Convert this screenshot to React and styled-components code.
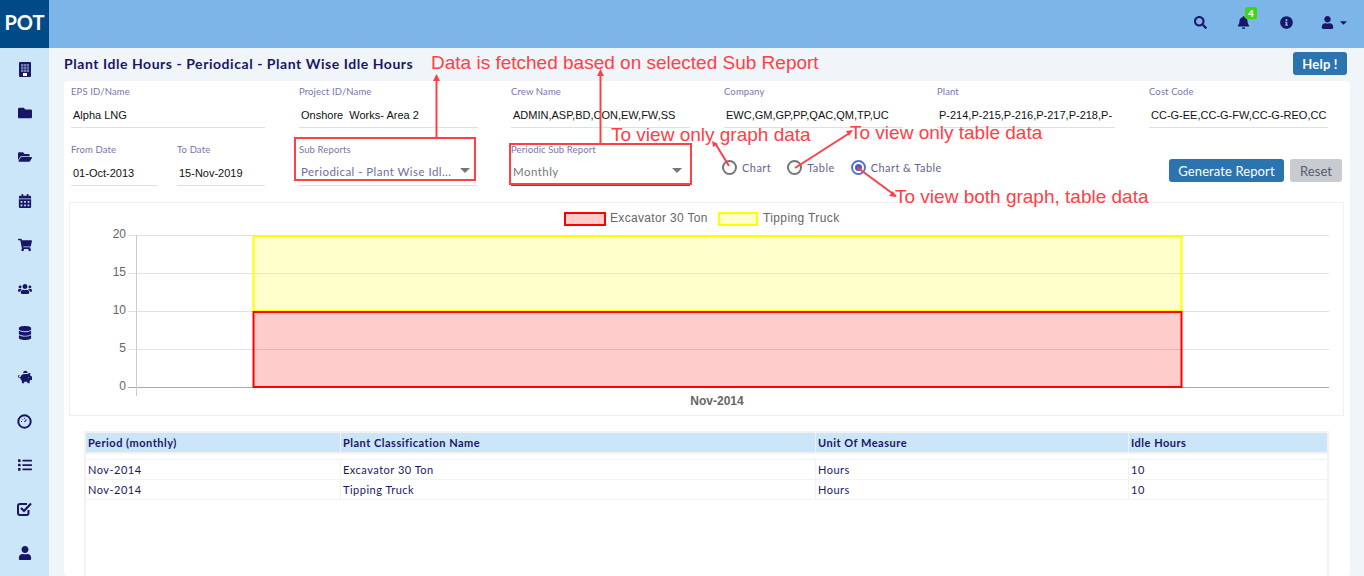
import React from "react";
import styled, { createGlobalStyle } from "styled-components";
import {
  FaFolder, FaFolderOpen, FaCalendarAlt, FaShoppingCart, FaUsers, FaDatabase,
  FaPiggyBank, FaUser, FaSearch, FaBell, FaInfoCircle, FaCaretDown, FaList,
} from "react-icons/fa";

const NAVY = "#1a1667";
const RED = "#ff4046";

const Global = createGlobalStyle`
  html, body { margin: 0; padding: 0; height: 100%; overflow: hidden; background: #f0f5f9; }
  body { font-family: Lato, "Liberation Sans", sans-serif; }
  * { box-sizing: border-box; }
`;

const Page = styled.div`
  position: relative;
  width: 1364px;
  height: 576px;
  overflow: hidden;
  display: grid;
  grid-template-columns: 49px 1fr;
  grid-template-rows: 48px 1fr;
`;
const Logo = styled.div`
  background: #004b87;
  color: #fff;
  font-weight: 700;
  font-size: 20px;
  display: flex;
  align-items: center;
  justify-content: center;
  padding-bottom: 5px;
`;
const TopBar = styled.header`
  background: #7cb6e8;
  display: flex;
  align-items: center;
  justify-content: flex-end;
  padding-right: 15px;
  gap: 30px;
  color: ${NAVY};
  font-size: 13px;
  padding-bottom: 3px;
`;
const TopIcon = styled.span`
  position: relative;
  display: flex;
  align-items: center;
`;
const UserIcon = styled(TopIcon)`
  margin-left: -2px;
`;
const CaretIcon = styled(FaCaretDown)`
  margin-left: 4px;
  font-size: 11px;
`;
const Badge = styled.span`
  position: absolute;
  top: -9px;
  left: 8px;
  min-width: 12px;
  height: 12px;
  border-radius: 2px;
  background: #39d811;
  color: #fff;
  font-size: 10px;
  font-weight: 700;
  text-align: center;
  line-height: 12px;
`;
const Sidebar = styled.nav`
  background: #cbe5f9;
  color: ${NAVY};
  display: flex;
  flex-direction: column;
  align-items: center;
  padding-top: 14px;
  font-size: 14px;
  gap: 30px;
`;
const SideIcon = styled.span`
  height: 14px;
  display: flex;
  align-items: center;
  justify-content: center;
`;
const Main = styled.main`
  padding: 4px 14px 0 15px;
  display: flex;
  flex-direction: column;
  min-width: 0;
`;
const TitleRow = styled.div`
  display: flex;
  align-items: flex-start;
  justify-content: space-between;
  height: 29px;
`;
const Title = styled.h1`
  margin: 3px 0 0;
  font-size: 14px;
  line-height: 17px;
  font-weight: 700;
  color: ${NAVY};
  letter-spacing: 0.55px;
`;
const Button = styled.button`
  border: 0;
  border-radius: 3px;
  font-family: Lato, sans-serif;
  font-size: 13px;
  letter-spacing: 0.1px;
  background: ${(p) => (p.$muted ? "#c8cbd0" : "#2c74b0")};
  color: ${(p) => (p.$muted ? "#555a75" : "#fff")};
  padding: 0;
  width: ${(p) => p.$w}px;
  height: 23px;
`;
const HelpButton = styled(Button)`
  margin-right: 3px;
  font-weight: 700;
  letter-spacing: 0.2px;
`;
const Card = styled.section`
  background: #fff;
  border-radius: 4px;
  padding: 5px 6px 0 5px;
  flex: 1;
  display: flex;
  flex-direction: column;
`;
const FormRow = styled.div`
  display: grid;
  grid-template-columns: 228px 212px 213px 213px 212px 1fr;
  height: 58px;
  padding-left: 2px;
`;
const Field = styled.div`
  width: ${(p) => p.$w || 179}px;
  height: 42px;
  border-bottom: 1px solid ${(p) => p.$line || "#e0e0e0"};
  display: flex;
  flex-direction: column;
`;
const Label = styled.label`
  font-size: 9.5px;
  line-height: 11px;
  letter-spacing: 0.12px;
  color: #7a76a8;
`;
const Value = styled.div`
  font-family: "Liberation Sans", sans-serif;
  font-size: 11px;
  line-height: 14px;
  color: #111;
  margin-top: 11px;
  padding-left: 2px;
  white-space: pre;
  overflow: hidden;
`;
const DateGroup = styled.div`
  display: flex;
  gap: 19px;
`;
const SelectValue = styled.div`
  font-size: 11.5px;
  line-height: 14px;
  letter-spacing: 0.45px;
  color: ${(p) => (p.$grey ? "#777" : "#6f6c9f")};
  margin-top: 10px;
  padding-left: 2px;
  display: flex;
  justify-content: space-between;
  align-items: center;
`;
const Caret = styled.span`
  width: 0;
  height: 0;
  margin: -4px 8px 0 0;
  border-left: 5px solid transparent;
  border-right: 5px solid transparent;
  border-top: 5px solid #777;
`;
const OptionsCell = styled.div`
  grid-column: 5 / span 2;
  margin-left: -213px;
  display: flex;
  align-items: flex-start;
  justify-content: space-between;
  padding-right: 1px;
`;
const Radios = styled.div`
  display: flex;
  gap: 16px;
  margin: 16px 0 0 -2px;
`;
const Radio = styled.span`
  display: flex;
  align-items: center;
  gap: 5px;
  font-size: 11px;
  letter-spacing: 0.45px;
  color: #66638f;
`;
const Dot = styled.span`
  width: 15px;
  height: 15px;
  border-radius: 50%;
  border: 2px solid ${(p) => (p.$on ? "#5b6fc9" : "#757575")};
  display: flex;
  align-items: center;
  justify-content: center;
  &::after {
    content: "";
    width: 7px;
    height: 7px;
    border-radius: 50%;
    background: ${(p) => (p.$on ? "#4a5fc4" : "transparent")};
  }
`;
const Actions = styled.div`
  display: flex;
  gap: 6px;
  margin-top: 15px;
  margin-right: 1px;
`;
const ChartBox = styled.div`
  height: 214px;
  border: 1px solid #f0f0f0;
`;
const ChartSvg = styled.svg`
  display: block;
`;
const TableWrap = styled.div`
  margin: 15px 15px 0 15px;
  flex: 1;
  background: #fff;
  border-left: 2px solid #f2f2f2;
  border-right: 2px solid #f2f2f2;
`;
const Grid = styled.div`
  display: grid;
  grid-template-columns: 255px 475px 313px 1fr;
`;
const HeadGrid = styled(Grid)`
  background: #f2f2f2;
  padding: 2px 1px;
  margin: 0 -1px;
  height: 23px;
`;
const Head = styled.div`
  background: #cbe5f9;
  color: ${NAVY};
  font-weight: 700;
  font-size: 11px;
  letter-spacing: 0.5px;
  line-height: 19px;
  padding-left: 2px;
  border-right: 1px solid #f2f2f2;
  &:last-child { border-right: 0; }
`;
const Gap = styled.div`
  height: 5px;
`;
const BodyGrid = styled(Grid)`
  border-top: 1px solid #f2f2f2;
  height: 20px;
`;
const Cell = styled.div`
  color: ${NAVY};
  font-size: 11px;
  letter-spacing: 0.5px;
  line-height: 19px;
  padding-left: 2px;
  border-right: 1px solid #f2f2f2;
  &:last-child { border-right: 0; }
`;
const RowsEnd = styled.div`
  border-top: 1px solid #f2f2f2;
`;

/* overlays: annotations drawn on top of the screenshot */
const Note = styled.span`
  position: absolute;
  left: ${(p) => p.$x}px;
  top: ${(p) => p.$y}px;
  font-family: "Liberation Sans", sans-serif;
  font-size: 19px;
  line-height: 20px;
  color: ${RED};
  white-space: nowrap;
`;
const Mark = styled.span`
  position: absolute;
  left: ${(p) => p.$x}px;
  top: ${(p) => p.$y}px;
  width: ${(p) => p.$w}px;
  height: ${(p) => p.$h}px;
  border: 2px solid ${RED};
`;
const ArrowLayer = styled.svg`
  position: absolute;
  left: 0;
  top: 0;
  pointer-events: none;
`;

const fields = [
  ["EPS ID/Name", "Alpha LNG", 194],
  ["Project ID/Name", "Onshore  Works- Area 2"],
  ["Crew Name", "ADMIN,ASP,BD,CON,EW,FW,SS"],
  ["Company", "EWC,GM,GP,PP,QAC,QM,TP,UC"],
  ["Plant", "P-214,P-215,P-216,P-217,P-218,P-", 178],
  ["Cost Code", "CC-G-EE,CC-G-FW,CC-G-REO,CC"],
];
const rows = [
  ["Nov-2014", "Excavator 30 Ton", "Hours", "10"],
  ["Nov-2014", "Tipping Truck", "Hours", "10"],
];

function Tower() {
  return (
    <svg width="12" height="15" viewBox="0 0 12 15">
      <rect width="12" height="15" rx="1" fill="currentColor" />
      <rect x="2" y="2" width="8" height="8" fill="#6f7fb0" />
      <path d="M4.5 2v8M7.5 2v8M2 4.5h8M2 7.2h8" stroke="#2c3480" strokeWidth="0.7" />
      <rect x="4" y="11" width="4" height="3" fill="#fff" />
    </svg>
  );
}
function Gauge() {
  return (
    <svg width="15" height="15" viewBox="0 0 15 15" fill="none" stroke="currentColor">
      <circle cx="7.5" cy="7.5" r="6.2" strokeWidth="2" />
      <path d="M7.5 8 L9.5 5.5" strokeWidth="1.2" />
      <path d="M4 7.5h1M5.3 5l.6.6M7.5 3.8v1" strokeWidth="1" />
    </svg>
  );
}
function CheckBox() {
  return (
    <svg width="15" height="14" viewBox="0 0 15 14" fill="none" stroke="currentColor" strokeWidth="2">
      <path d="M11.5 8v3a2 2 0 0 1-2 2H3a2 2 0 0 1-2-2V4a2 2 0 0 1 2-2h7" />
      <path d="M4 6l3 3 7-7.5" strokeWidth="2.2" />
    </svg>
  );
}
const sideIcons = [Tower, FaFolder, FaFolderOpen, FaCalendarAlt, FaShoppingCart, FaUsers, FaDatabase, FaPiggyBank, Gauge, FaList, CheckBox, FaUser];

function Chart() {
  const grid = [[235, "20"], [273, "15"], [311, "10"], [349, "5"], [387, "0"]];
  return (
    <ChartSvg width="1273" height="212" viewBox="0 0 1273 212">
      <g transform="translate(-70 -203)" fontFamily="Liberation Sans, sans-serif" fontSize="12" fill="#666">
        <rect x="565" y="213" width="40" height="12" fill="#ffcccc" stroke="#ff0000" strokeWidth="2" />
        <text x="610" y="222" letterSpacing="0.33">Excavator 30 Ton</text>
        <rect x="719" y="213" width="38" height="12" fill="#ffffcc" stroke="#ffff00" strokeWidth="2" />
        <text x="763" y="222" letterSpacing="0.38">Tipping Truck</text>
        {grid.map(([y, t]) => (
          <g key={t}>
            <line x1="128" x2="1329" y1={y + 0.5} y2={y + 0.5} stroke={t === "0" ? "#aaa" : "#e2e2e2"} />
            <text x="126" y={y + 3} textAnchor="end">{t}</text>
          </g>
        ))}
        <line x1="136.5" x2="136.5" y1="235" y2="396" stroke="#ccc" />
        <rect x="253.5" y="236" width="928" height="75" fill="#ffff00" fillOpacity="0.2" stroke="#ffff00" strokeWidth="2" />
        <rect x="253.5" y="312" width="928" height="75" fill="#ff0000" fillOpacity="0.2" stroke="#ff0000" strokeWidth="2" />
        <text x="717" y="405" textAnchor="middle" fontWeight="700">Nov-2014</text>
      </g>
    </ChartSvg>
  );
}

export default function App() {
  return (
    <Page>
      <Global />
      <Logo>POT</Logo>
      <TopBar>
        <TopIcon><FaSearch /></TopIcon>
        <TopIcon><FaBell /><Badge>4</Badge></TopIcon>
        <TopIcon><FaInfoCircle /></TopIcon>
        <UserIcon><FaUser /><CaretIcon /></UserIcon>
      </TopBar>
      <Sidebar>
        {sideIcons.map((I, i) => <SideIcon key={i}><I /></SideIcon>)}
      </Sidebar>
      <Main>
        <TitleRow>
          <Title>Plant Idle Hours - Periodical - Plant Wise Idle Hours</Title>
          <HelpButton $w={54}>Help !</HelpButton>
        </TitleRow>
        <Card>
          <FormRow>
            {fields.map(([l, v, w]) => (
              <Field key={l} $w={w}>
                <Label>{l}</Label>
                <Value>{v}</Value>
              </Field>
            ))}
          </FormRow>
          <FormRow>
            <DateGroup>
              <Field $w={87}><Label>From Date</Label><Value>01-Oct-2013</Value></Field>
              <Field $w={88}><Label>To Date</Label><Value>15-Nov-2019</Value></Field>
            </DateGroup>
            <Field>
              <Label>Sub Reports</Label>
              <SelectValue>Periodical - Plant Wise Idl...<Caret /></SelectValue>
            </Field>
            <Field $line="#3f51b5">
              <Label>Periodic Sub Report</Label>
              <SelectValue $grey>Monthly<Caret /></SelectValue>
            </Field>
            <OptionsCell>
              <Radios>
                <Radio><Dot />Chart</Radio>
                <Radio><Dot />Table</Radio>
                <Radio><Dot $on />Chart &amp; Table</Radio>
              </Radios>
              <Actions>
                <Button $w={115}>Generate Report</Button>
                <Button $muted $w={52}>Reset</Button>
              </Actions>
            </OptionsCell>
          </FormRow>
          <ChartBox><Chart /></ChartBox>
          <TableWrap>
            <HeadGrid>
              <Head>Period (monthly)</Head>
              <Head>Plant Classification Name</Head>
              <Head>Unit Of Measure</Head>
              <Head>Idle Hours</Head>
            </HeadGrid>
            <Gap />
            {rows.map((r) => (
              <BodyGrid key={r[1]}>
                {r.map((c, i) => <Cell key={i}>{c}</Cell>)}
              </BodyGrid>
            ))}
            <RowsEnd />
          </TableWrap>
        </Card>
      </Main>

      <Mark $x={294} $y={137} $w={182} $h={44} />
      <Mark $x={509} $y={143} $w={183} $h={42} />
      <ArrowLayer width="1364" height="576" fill="none" stroke={RED} strokeWidth="2">
        <path d="M436.5 137V80" />
        <path d="M600.5 143V74" />
        <path d="M729 166L715 143" />
        <path d="M795 168L848 134" />
        <path d="M858 168L896 196" />
        <g fill={RED} stroke="none">
          <path d="M436.5 74l-3.5 7h7z" />
          <path d="M600.5 69l-3.5 7h7z" />
          <path d="M712 141l6 3-5 3z" />
          <path d="M853 130l-7 1 3 5z" />
          <path d="M896 197l-3-6-4 5z" />
        </g>
      </ArrowLayer>
      <Note $x={431} $y={53}>Data is fetched based on selected Sub Report</Note>
      <Note $x={611} $y={125}>To view only graph data</Note>
      <Note $x={850} $y={123}>To view only table data</Note>
      <Note $x={895} $y={187}>To view both graph, table data</Note>
    </Page>
  );
}
